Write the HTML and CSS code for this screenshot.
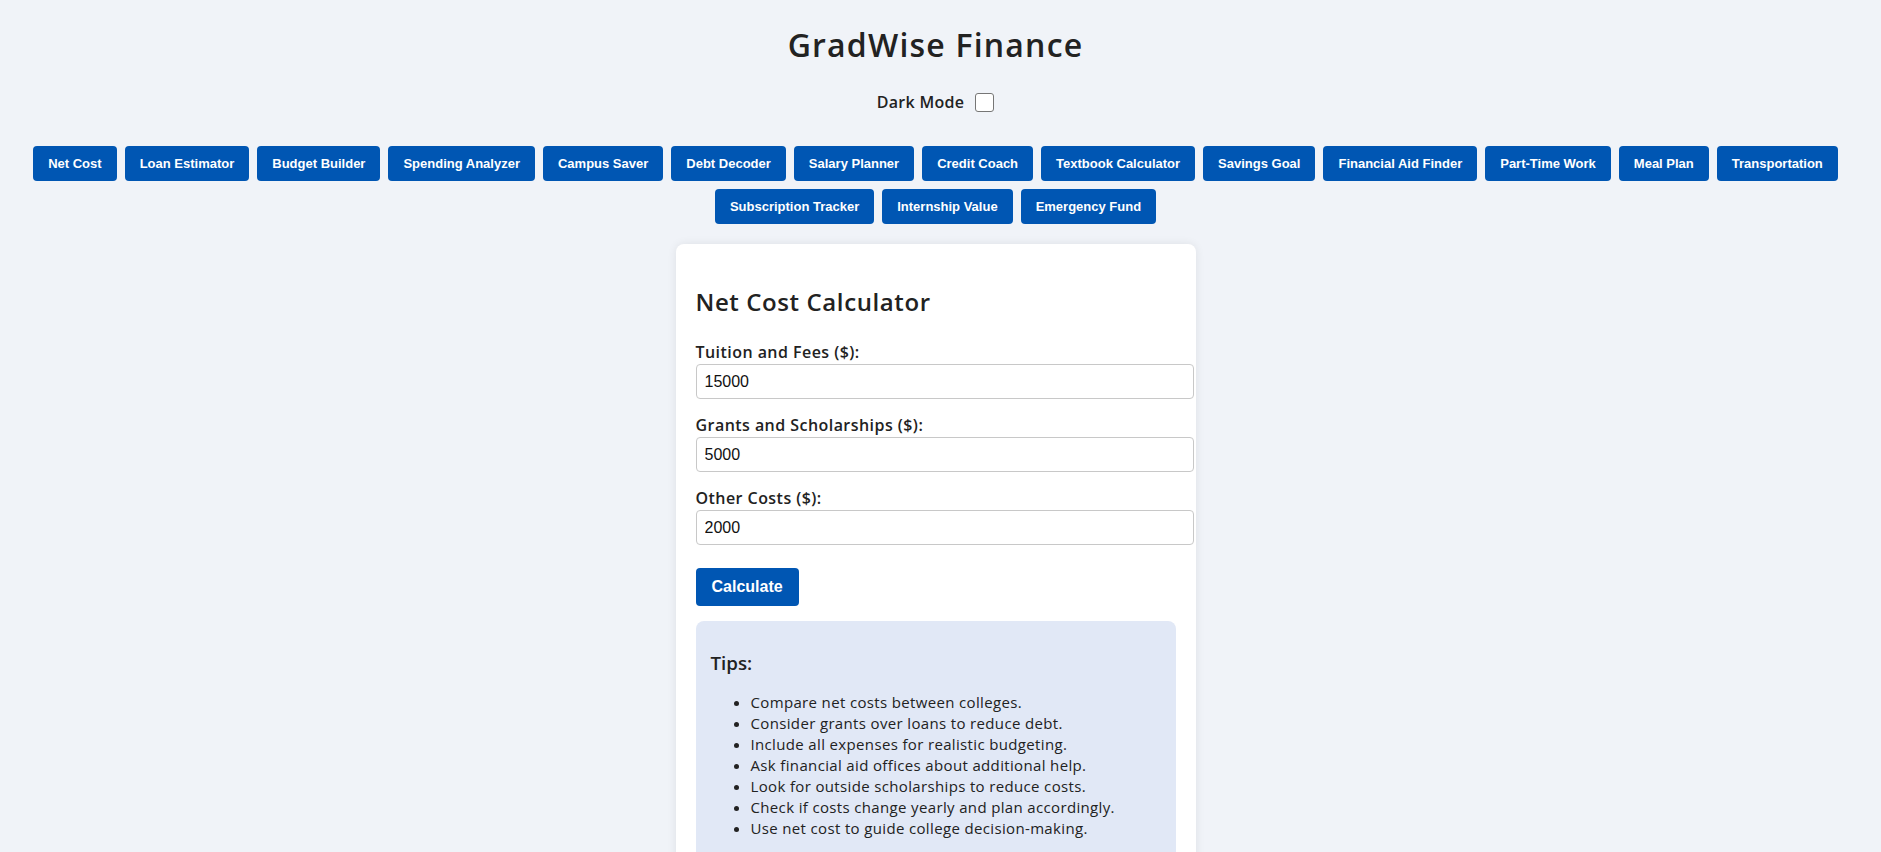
FILE: index.html
```html
<!DOCTYPE html>
<html lang="en">
<head>
    <meta charset="UTF-8">
    <meta name="viewport" content="width=device-width, initial-scale=1.0">
    <title>GradWise Finance</title>
    <link rel="stylesheet" href="styles.css">
</head>
<body>
    <h1>GradWise Finance</h1>

    <div class="theme-toggle">
        <label for="darkMode">Dark Mode</label>
        <input type="checkbox" id="darkMode">
    </div>

    <nav class="tool-nav">
        <button class="tool-btn">Net Cost</button>
        <button class="tool-btn">Loan Estimator</button>
        <button class="tool-btn">Budget Builder</button>
        <button class="tool-btn">Spending Analyzer</button>
        <button class="tool-btn">Campus Saver</button>
        <button class="tool-btn">Debt Decoder</button>
        <button class="tool-btn">Salary Planner</button>
        <button class="tool-btn">Credit Coach</button>
        <button class="tool-btn">Textbook Calculator</button>
        <button class="tool-btn">Savings Goal</button>
        <button class="tool-btn">Financial Aid Finder</button>
        <button class="tool-btn">Part-Time Work</button>
        <button class="tool-btn">Meal Plan</button>
        <button class="tool-btn">Transportation</button>
        <button class="tool-btn">Subscription Tracker</button>
        <button class="tool-btn">Internship Value</button>
        <button class="tool-btn">Emergency Fund</button>
    </nav>

    <main class="calculator">
        <h2>Net Cost Calculator</h2>

        <label for="tuition">Tuition and Fees ($):</label>
        <input type="number" id="tuition" value="15000">

        <label for="grants">Grants and Scholarships ($):</label>
        <input type="number" id="grants" value="5000">

        <label for="other">Other Costs ($):</label>
        <input type="number" id="other" value="2000">

        <button class="calc-btn" id="calcButton">Calculate</button>
        <p id="result"></p>

        <div class="tips">
            <h3>Tips:</h3>
            <ul>
                <li>Compare net costs between colleges.</li>
                <li>Consider grants over loans to reduce debt.</li>
                <li>Include all expenses for realistic budgeting.</li>
                <li>Ask financial aid offices about additional help.</li>
                <li>Look for outside scholarships to reduce costs.</li>
                <li>Check if costs change yearly and plan accordingly.</li>
                <li>Use net cost to guide college decision-making.</li>
            </ul>
        </div>
    </main>

    <script>
    const darkMode = document.getElementById('darkMode');
    const calcButton = document.getElementById('calcButton');
    const result = document.getElementById('result');

    darkMode.addEventListener('change', () => {
        document.body.classList.toggle('dark', darkMode.checked);
    });

    calcButton.addEventListener('click', () => {
        const tuition = Number(document.getElementById('tuition').value) || 0;
        const grants = Number(document.getElementById('grants').value) || 0;
        const other = Number(document.getElementById('other').value) || 0;
        result.textContent = `Net Cost: $${(tuition - grants + other).toLocaleString()}`;
    });
    </script>
</body>
</html>
```

FILE: styles.css
```css
body {
    font-family: 'Open Sans', 'Liberation Sans', sans-serif;
    background-color: #f0f3f8;
    color: #222;
    margin: 0;
    padding-right: 10px; /* room the scrollbar would take */
    text-align: center;
}

h1 {
    font-size: 32px;
    font-weight: 600;
    line-height: 48px;
    letter-spacing: 1.2px;
    margin: 21px 0;
}

.theme-toggle {
    display: flex;
    justify-content: center;
    align-items: center;
    gap: 11px;
    height: 24px;
    font-size: 16px;
    font-weight: 600;
    letter-spacing: 0.3px;
}

.theme-toggle input {
    appearance: none;
    width: 19px;
    height: 19px;
    margin: 0;
    border: 1px solid #767676;
    border-radius: 3px;
    background: #fff;
}

.theme-toggle input:checked {
    background: #0056b3;
    border-color: #0056b3;
}

.tool-nav {
    display: flex;
    flex-wrap: wrap;
    justify-content: center;
    gap: 8px;
    margin: 32px 0 20px;
}

.tool-btn, .calc-btn {
    font-family: 'Liberation Sans', Arial, sans-serif;
    font-weight: bold;
    color: #fff;
    background-color: #0056b3;
    border: none;
    border-radius: 4px;
    cursor: pointer;
}

.tool-btn {
    font-size: 13px;
    line-height: 15px;
    padding: 10px 15px;
}

.tool-btn:hover, .calc-btn:hover {
    background-color: #004494;
}

.calculator {
    width: 480px;
    margin: 0 auto;
    padding: 20px;
    background-color: #fff;
    border-radius: 8px;
    box-shadow: 0 0 10px rgba(0, 0, 0, 0.08);
    text-align: left;
}

.calculator h2 {
    font-size: 24px;
    font-weight: 600;
    line-height: 36px;
    letter-spacing: 0.6px;
    margin: 20px 0;
}

.calculator label {
    display: block;
    font-size: 16px;
    font-weight: 600;
    line-height: 24px;
    letter-spacing: 0.45px;
}

.calculator input {
    display: block;
    width: 100%;
    padding: 8px;
    margin: 0 0 14px;
    font-family: 'Liberation Sans', Arial, sans-serif;
    font-size: 16px;
    line-height: 17px;
    color: #111;
    border: 1px solid #c8c8c8;
    border-radius: 4px;
}

.calc-btn {
    font-size: 16px;
    line-height: 18px;
    padding: 10px 16px;
    margin-top: 9px;
}

#result {
    margin: 0;
}

.tips {
    margin-top: 15px;
    padding: 15px;
    background-color: #e1e8f6;
    border-radius: 8px;
}

.tips h3 {
    font-size: 18.72px;
    font-weight: 600;
    line-height: 28px;
    margin: 13px 0 0;
}

.tips ul {
    font-size: 15px;
    line-height: 21px;
    letter-spacing: 0.35px;
    margin: 15px 0;
    padding-left: 40px;
}

body.dark {
    background-color: #1e1e1e;
    color: #eee;
}

body.dark .calculator {
    background-color: #2c2c2c;
}

body.dark .tips {
    background-color: #333b4a;
}
```
